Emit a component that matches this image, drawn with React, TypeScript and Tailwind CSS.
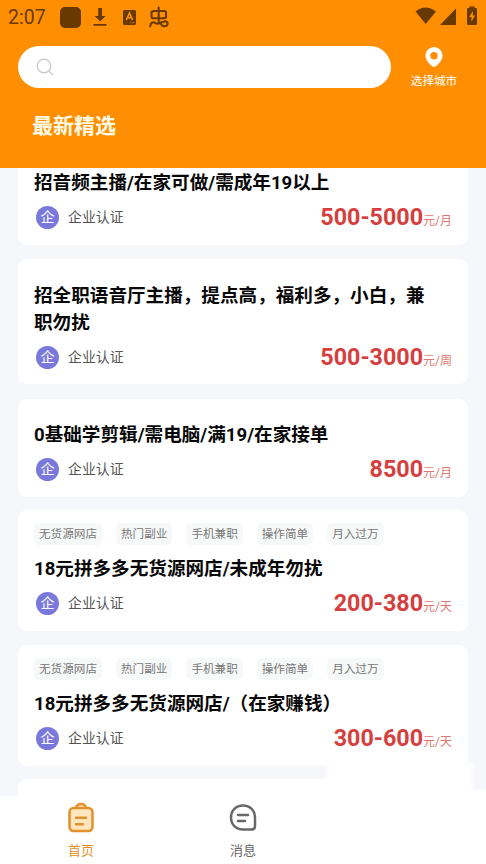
import React from 'react';

type Job = { tags?: string[]; title: string; pay: string; unit: string; box: string };

const tags = ['无货源网店', '热门副业', '手机兼职', '操作简单', '月入过万'];

const jobs: Job[] = [
  { title: '招音频主播/在家可做/需成年19以上', pay: '500-5000', unit: '元/月', box: 'h-[98px] pb-[10px]' },
  { title: '招全职语音厅主播，提点高，福利多，小白，兼职勿扰', pay: '500-3000', unit: '元/周', box: 'h-[125px] mt-[14px] pb-[9px]' },
  { title: '0基础学剪辑/需电脑/满19/在家接单', pay: '8500', unit: '元/月', box: 'h-[98px] mt-[15px] pb-[10px]' },
  { tags, title: '18元拼多多无货源网店/未成年勿扰', pay: '200-380', unit: '元/天', box: 'h-[121px] mt-[13px] pb-[10px]' },
  { tags, title: '18元拼多多无货源网店/（在家赚钱）', pay: '300-600', unit: '元/天', box: 'h-[121px] mt-[14px] pb-[10px]' },
];

function StatusBar() {
  return (
    <div className="flex h-[34px] items-center pl-[8px] pr-[9px] text-[#683a02]">
      <span className="w-[52px] pt-px text-[19.5px] leading-[34px]">2:07</span>
      <span className="h-[21px] w-[21px] rounded-[5px] bg-[#683a02]" />
      <svg className="ml-[12px]" width="14" height="20" viewBox="0 0 14 20" fill="currentColor">
        <path d="M5.2 1h3.8v8h3.6L7.1 14.5 1.6 9h3.6zM.5 17h13v1.7H.5z" />
      </svg>
      <svg className="ml-[16px]" width="13" height="15" viewBox="0 0 13 15">
        <rect width="13" height="15" rx="1.5" fill="currentColor" />
        <path d="M3.4 10 6.5 3l3.1 7M4.6 7.8h3.8" fill="none" stroke="#ff8f00" strokeWidth="1.6" />
        <path d="M7 12.7h5" stroke="#ff8f00" strokeWidth=".8" strokeDasharray="1 .6" />
      </svg>
      <svg className="ml-[13px]" width="20" height="22" viewBox="0 0 20 22" fill="none" stroke="currentColor" strokeWidth="2.1" strokeLinecap="round" strokeLinejoin="round">
        <path d="M9.700 1.500V17M5 5h10.500q1.500 0 1.500 1.500v4q0 1.800-2 1.800H4.500q-2 0-2-1.800v-4Q2.500 5 5 5" />
        <path d="M1.200 20.300c.3-4.300 3.300-4.800 5-3.300 2.500 2.200 5.300-.5 7-1M14.500 15.800c2.500-1.500 4.800.7 3.900 2.800-1 2.400-5.400 2.400-6.700-1" />
      </svg>
      <svg className="-mt-[3px] ml-auto" width="22" height="17" viewBox="0 0 22 17" fill="currentColor">
        <path d="M.5 4.400Q10.500-3.500 21 4.400L10.700 17z" />
      </svg>
      <svg className="-mt-[2px] ml-[3px]" width="16" height="17" viewBox="0 0 16 17" fill="currentColor">
        <path d="M16 .5V17H0z" />
      </svg>
      <svg className="-mt-[3px] ml-[11px]" width="10" height="19" viewBox="0 0 10 19">
        <path d="M2.500 2V.5h5V2H9q1 0 1 1v15q0 1-1 1H1q-1 0-1-1V3q0-1 1-1z" fill="currentColor" />
        <path d="M5.800 5 2.300 11h2.200v4.500L8 9.500H5.800z" fill="#ff8f00" />
      </svg>
    </div>
  );
}

function JobCard({ job }: { job: Job }) {
  return (
    <article className={`flex shrink-0 flex-col justify-end rounded-[9px] bg-white pl-[16px] pr-[16px] ${job.box}`}>
      {job.tags && (
        <div className="mb-[11px] flex gap-[14px]">
          {job.tags.map((tag) => (
            <span key={tag} className="h-[22px] whitespace-nowrap rounded-[5px] bg-[#f7f9f9] px-[5px] text-[11.6px] leading-[22px] text-[#777]">
              {tag}
            </span>
          ))}
        </div>
      )}
      <h2 className="w-[396px] text-[18.6px] font-bold leading-[27px] text-[#080808]">{job.title}</h2>
      <div className="mt-[4px] flex h-[34px] items-center">
        <span className="mb-[2px] ml-[2px] flex h-[23px] w-[23px] items-center justify-center rounded-full bg-[#7b78dc] text-[14px] leading-none text-white">
          企
        </span>
        <span className="ml-[9px] pb-px text-[13.9px] text-[#555]">企业认证</span>
        <span className="ml-auto flex items-baseline pt-[2px] leading-[34px]">
          <b className="text-[23.3px] text-[#d5403f]">{job.pay}</b>
          <span className="text-[12px] text-[#df7771]">{job.unit}</span>
        </span>
      </div>
    </article>
  );
}

export default function App() {
  return (
    <div className="relative flex h-[864px] w-[486px] flex-col overflow-hidden bg-[#f6f7fa] font-[Roboto,'Noto_Sans_CJK_SC',sans-serif]">
      <header className="z-10 h-[168px] shrink-0 bg-[#ff8f00]">
        <StatusBar />
        <div className="mt-[12px] flex h-[42px] pl-[18px]">
          <div className="flex w-[373px] items-center rounded-full bg-white pl-[18px]">
            <svg width="18" height="18" viewBox="0 0 18 18" fill="none" stroke="#c5cacd" strokeWidth="1.3">
              <circle cx="8" cy="8" r="6.800" />
              <path d="m13 13 4 4" />
            </svg>
          </div>
          <div className="flex w-[86px] flex-col items-center text-white">
            <svg className="mt-px shrink-0" width="18" height="20" viewBox="0 0 18 20">
              <path fillRule="evenodd" fill="currentColor" d="M9 0a8.600 8.600 0 0 1 8.600 8.600C17.600 14 11 20 9 20S.4 14 .4 8.600A8.600 8.600 0 0 1 9 0Zm0 5a3.700 3.700 0 1 0 0 7.400A3.700 3.700 0 0 0 9 5Z" />
            </svg>
            <span className="mt-[5px] whitespace-nowrap text-[11.6px] leading-[18px]">选择城市</span>
          </div>
        </div>
        <h1 className="ml-[32px] mt-[23px] text-[21px] font-bold leading-[30px] text-[#fffbe9]">最新精选</h1>
      </header>

      <main className="flex h-[628px] shrink-0 flex-col overflow-hidden px-[18px]">
        <div className="-mt-[21px] flex flex-col">
          {jobs.map((job) => (
            <JobCard key={job.title} job={job} />
          ))}
          <div className="mt-[13px] h-[60px] rounded-t-[9px] bg-white" />
        </div>
      </main>

      <nav className="flex h-[68px] shrink-0 bg-white text-[13px] leading-[18px]">
        <div className="flex w-[162px] flex-col items-center text-[#e2912c]">
          <svg className="mt-[6px]" width="28" height="32" viewBox="0 0 28 32" fill="none" stroke="currentColor" strokeWidth="2.500" strokeLinecap="round">
            <path d="M9 6c.3-5.500 9.700-5.500 10 0" fill="#ffe6bf" />
            <rect x="2.500" y="6" width="23" height="23" rx="4" fill="#ffe6bf" />
            <path d="M9 15.700h10M9 22.300h7" />
          </svg>
          <span className="mt-[8px]">首页</span>
        </div>
        <div className="flex w-[162px] flex-col items-center text-[#686868]">
          <svg className="mt-[6px]" width="30" height="32" viewBox="0 0 30 32" fill="none" stroke="currentColor" strokeWidth="2.500" strokeLinecap="round">
            <path d="M15 3.500c7 0 12 5 12 12V24q0 3.500-3.500 3.500H15c-7 0-12-5-12-12s5-12 12-12Z" />
            <path d="M10 13h10M10 19h7" />
          </svg>
          <span className="mt-[8px]">消息</span>
        </div>
      </nav>
      <div className="absolute left-[326px] top-[763px] h-[120px] w-[147px] rounded-tl-[8px] bg-white blur-[3px]" />
      <div className="absolute left-[440px] top-[790px] h-[90px] w-[70px] bg-white" />
    </div>
  );
}
